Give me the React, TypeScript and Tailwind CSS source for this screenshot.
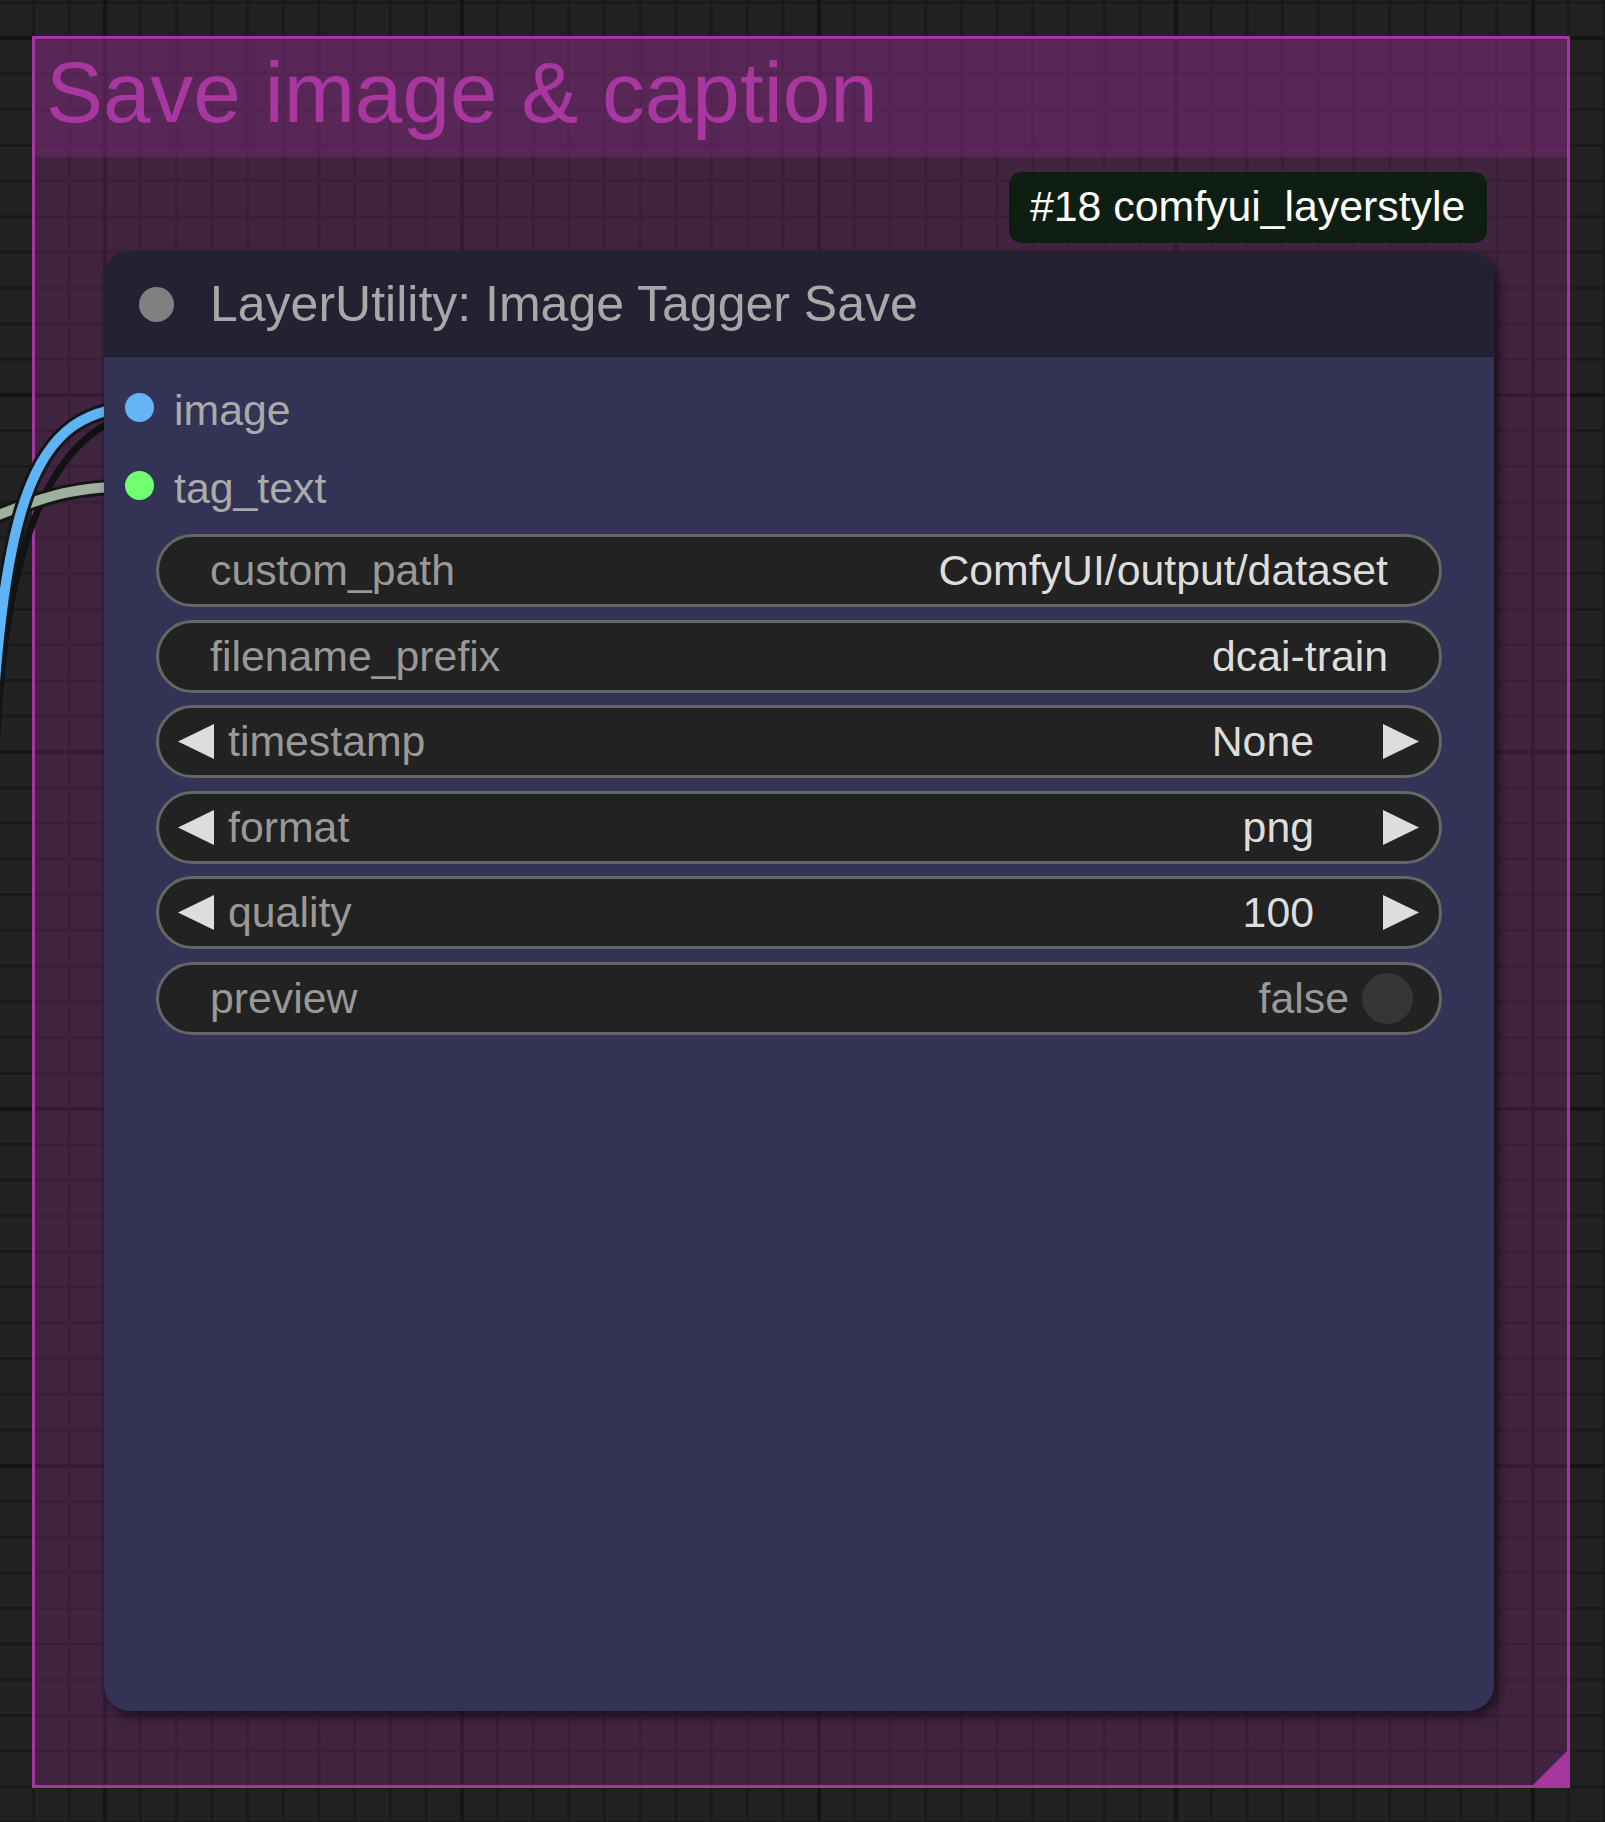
import React from 'react';

type WidgetKind = 'text' | 'combo' | 'toggle';

interface WidgetRow {
  label: string;
  value: string;
  kind: WidgetKind;
}

const widgets: WidgetRow[] = [
  { label: 'custom_path', value: 'ComfyUI/output/dataset', kind: 'text' },
  { label: 'filename_prefix', value: 'dcai-train', kind: 'text' },
  { label: 'timestamp', value: 'None', kind: 'combo' },
  { label: 'format', value: 'png', kind: 'combo' },
  { label: 'quality', value: '100', kind: 'combo' },
  { label: 'preview', value: 'false', kind: 'toggle' },
];

const slots = [
  { name: 'image', color: 'bg-[#64b5f6]' },
  { name: 'tag_text', color: 'bg-[#70ff70]' },
];

const Arrow = ({ dir }: { dir: 'left' | 'right' }) => (
  <svg width="36" height="35" viewBox="0 0 36 35" className="shrink-0">
    <polygon points={dir === 'left' ? '0,17.5 36,0 36,35' : '36,17.5 0,0 0,35'} fill="#dddddd" />
  </svg>
);

const Widget = ({ row }: { row: WidgetRow }) => {
  const base =
    'flex items-center h-[73px] rounded-full border-[3px] border-[#666666] bg-[#222222] text-[42.8px] leading-none whitespace-nowrap';

  if (row.kind === 'combo') {
    return (
      <div className={`${base} pl-[19px] pr-[20px]`}>
        <Arrow dir="left" />
        <span className="ml-[14px] text-[#999999]">{row.label}</span>
        <span className="flex-1" />
        <span className="text-[#dddddd]">{row.value}</span>
        <span className="ml-[69px] flex">
          <Arrow dir="right" />
        </span>
      </div>
    );
  }

  if (row.kind === 'toggle') {
    return (
      <div className={`${base} pl-[51px] pr-[26px]`}>
        <span className="text-[#999999]">{row.label}</span>
        <span className="flex-1" />
        <span className="text-[#999999]">{row.value}</span>
        <span className="ml-[13px] w-[51px] h-[51px] rounded-full bg-[#363636]" />
      </div>
    );
  }

  return (
    <div className={`${base} pl-[51px] pr-[51px]`}>
      <span className="text-[#999999]">{row.label}</span>
      <span className="flex-1" />
      <span className="text-[#dddddd]">{row.value}</span>
    </div>
  );
};

// links coming in from the left edge of the canvas
const Wires = () => (
  <svg
    width="1605"
    height="1822"
    viewBox="0 0 1605 1822"
    className="absolute left-0 top-0 z-[1] pointer-events-none"
  >
    <path d="M 139 412 C 45 432, 2 560, -4 760" fill="none" stroke="#121212" strokeWidth="7" />
    <path d="M -10 518 C 40 500, 60 487, 139 486" fill="none" stroke="#161616" strokeWidth="16" />
    <path d="M -10 518 C 40 500, 60 487, 139 486" fill="none" stroke="#9fb09f" strokeWidth="10" />
    <path d="M -15 900 C -5 520, 20 409, 139 407" fill="none" stroke="#161616" strokeWidth="16" />
    <path d="M -15 900 C -5 520, 20 409, 139 407" fill="none" stroke="#5fb4f8" strokeWidth="10" />
  </svg>
);

const App = () => {
  return (
    <div className="relative w-[1605px] h-[1822px] overflow-hidden pl-[32px] pt-[36px] font-['Liberation_Sans',Arial,sans-serif] bg-[#222222] bg-[linear-gradient(to_right,#151515_4px,transparent_4px),linear-gradient(to_bottom,#151515_4px,transparent_4px),linear-gradient(to_right,#1a1a1a_3px,transparent_3px),linear-gradient(to_bottom,#1a1a1a_3px,transparent_3px)] [background-size:357px_357px,357px_357px,35.7px_35.7px,35.7px_35.7px] [background-position:103px_36px,103px_36px,32px_1px,32px_1px]">
      <Wires />

      {/* Group */}
      <div className="relative flex flex-col w-[1538px] h-[1752px] border-[3px] border-[#a5359f] bg-[rgba(161,48,155,0.25)]">
        <div className="h-[118px] shrink-0 pl-[11px] pt-[11px] bg-[rgba(161,48,155,0.25)] text-[85.5px] leading-none text-[#a8379f] whitespace-nowrap">
          Save image &amp; caption
        </div>

        <div className="flex justify-end pr-[80px] mt-[15px]">
          <div className="flex items-center w-[478px] h-[71px] pl-[21px] pb-[3px] rounded-[13px] bg-[#0f1e12] text-[42.8px] leading-none text-white whitespace-nowrap">
            #18 comfyui_layerstyle
          </div>
        </div>

        {/* Node */}
        <div className="relative z-[2] flex flex-col ml-[69px] mt-[8px] w-[1390px] h-[1460px] rounded-[26px] bg-[#333355] shadow-[5px_6px_12px_rgba(0,0,0,0.55)]">
          <div className="flex items-center h-[106px] shrink-0 pl-[35px] rounded-t-[26px] bg-[#222233]">
            <span className="w-[35px] h-[35px] rounded-full bg-[#808080]" />
            <span className="ml-[36px] text-[50px] leading-none text-[#a8a8a8] whitespace-nowrap">
              LayerUtility: Image Tagger Save
            </span>
          </div>

          <div className="flex flex-col pt-[20px]">
            <div className="flex flex-col gap-[18px]">
              {slots.map((slot) => (
                <div key={slot.name} className="flex items-center h-[60px] pl-[21px]">
                  <span className={`w-[29px] h-[29px] rounded-full ${slot.color}`} />
                  <span className="ml-[20px] pt-[7px] text-[42.8px] leading-none text-[#aaaaaa]">{slot.name}</span>
                </div>
              ))}
            </div>

            <div className="flex flex-col gap-[12.6px] mt-[19px] mx-[52px]">
              {widgets.map((row) => (
                <Widget key={row.label} row={row} />
              ))}
            </div>
          </div>
        </div>

        <svg width="40" height="40" viewBox="0 0 40 40" className="absolute right-[-3px] bottom-[-3px]">
          <polygon points="40,0 40,40 0,40" fill="#a5359f" />
        </svg>
      </div>
    </div>
  );
};

export default App;
